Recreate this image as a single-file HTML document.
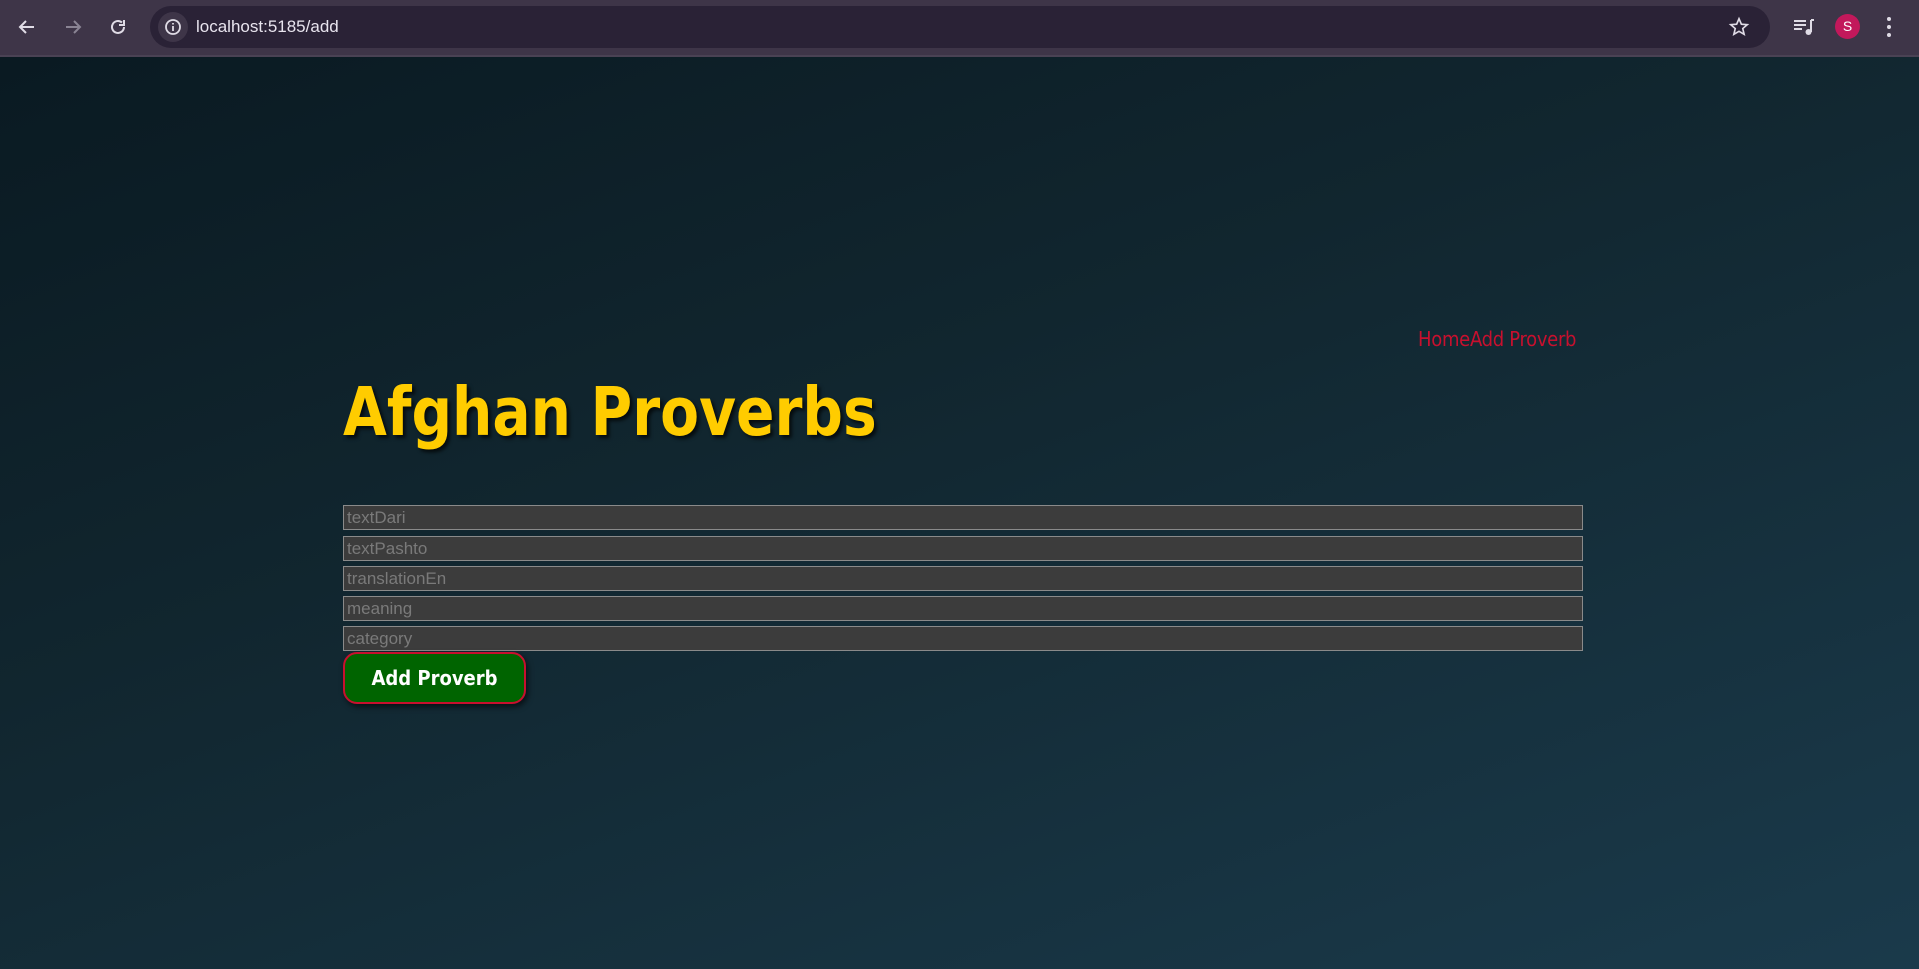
<!DOCTYPE html>
<html><head><meta charset="utf-8"><style>
html,body{margin:0;padding:0;width:1919px;height:969px;overflow:hidden;font-family:"Liberation Sans",sans-serif}
.bar{position:absolute;left:0;top:0;width:1919px;height:55px;background:#3e3548;border-bottom:2px solid #4a4254}
.omni{position:absolute;left:150px;top:6px;width:1620px;height:42px;border-radius:21px;background:#2a2236}
.url{position:absolute;left:196px;top:17px;color:#e8e4ee;font-size:17px}
.page{position:absolute;left:0;top:57px;width:1919px;height:912px;background:linear-gradient(160deg,#0a1a22 0%,#11262f 40%,#1a3a4b 100%)}
.nav{position:absolute;left:1418px;top:327px;color:#c8102e;font-size:20px;font-family:"DejaVu Sans Condensed","Liberation Sans",sans-serif;letter-spacing:-0.3px}
h1{position:absolute;left:343px;top:372px;margin:0;color:#ffcc00;font-size:67px;font-weight:bold;font-family:"DejaVu Sans Condensed","Liberation Sans",sans-serif;text-shadow:3px 3px 4px rgba(0,0,0,.7);transform:scaleX(0.94);transform-origin:left top;white-space:nowrap;line-height:80px}
.in{position:absolute;left:343px;width:1235px;height:23px;background:#3c3c3c;border:1px solid #8a8a8a;color:#7a7a7a;font-size:17px;line-height:23px;padding-left:3px;box-sizing:content-box}
.btn{position:absolute;left:343px;top:652px;width:179px;height:48px;background:#006400;border:2px solid #c8102e;border-radius:14px;color:#fff;font-weight:bold;font-size:20px;font-family:"DejaVu Sans Condensed","Liberation Sans",sans-serif;text-align:center;line-height:48px;box-shadow:2px 3px 6px rgba(0,0,0,.6)}
</style></head><body>
<div class="bar">
<svg style="position:absolute;left:16px;top:16px" width="22" height="22" viewBox="0 0 22 22"><path d="M18 11H4M10 5l-6 6 6 6" stroke="#e0dce6" stroke-width="2" fill="none"/></svg>
<svg style="position:absolute;left:62px;top:16px" width="22" height="22" viewBox="0 0 22 22"><path d="M4 11h14M12 5l6 6-6 6" stroke="#8a8494" stroke-width="2" fill="none"/></svg>
<svg style="position:absolute;left:107px;top:16px" width="22" height="22" viewBox="0 0 22 22"><path d="M17 11a6 6 0 1 1-2-4.5" stroke="#e0dce6" stroke-width="2" fill="none"/><path d="M17 4v5h-5" stroke="#e0dce6" stroke-width="2" fill="none"/></svg>
<div class="omni"></div>
<div style="position:absolute;left:158px;top:12px;width:30px;height:30px;border-radius:15px;background:#3e3548"></div>
<svg style="position:absolute;left:163px;top:17px" width="20" height="20" viewBox="0 0 20 20"><circle cx="10" cy="10" r="7" stroke="#e0dce6" stroke-width="1.8" fill="none"/><path d="M10 9v5M10 6v1.5" stroke="#e0dce6" stroke-width="1.8"/></svg>
<div class="url">localhost:5185/add</div>
<svg style="position:absolute;left:1728px;top:16px" width="22" height="22" viewBox="0 0 24 24"><path d="M12 3l2.6 6 6.4.5-4.9 4.2 1.5 6.3L12 16.7 6.4 20l1.5-6.3L3 9.5l6.4-.5z" stroke="#e0dce6" stroke-width="1.8" fill="none"/></svg>
<svg style="position:absolute;left:1792px;top:16px" width="24" height="22" viewBox="0 0 24 22"><path d="M2 5h12M2 9h12M2 13h8" stroke="#e0dce6" stroke-width="2"/><path d="M19 4v12" stroke="#e0dce6" stroke-width="2"/><path d="M19 4h3" stroke="#e0dce6" stroke-width="2"/><circle cx="16.5" cy="16" r="3" fill="#e0dce6"/></svg>
<div style="position:absolute;left:1835px;top:14px;width:25px;height:25px;border-radius:13px;background:#c2185b;color:#fff;font-size:14px;text-align:center;line-height:25px">S</div>
<svg style="position:absolute;left:1886px;top:16px" width="6" height="22" viewBox="0 0 6 22"><circle cx="3" cy="3" r="2" fill="#e0dce6"/><circle cx="3" cy="11" r="2" fill="#e0dce6"/><circle cx="3" cy="19" r="2" fill="#e0dce6"/></svg>
</div>
<div class="page"></div>
<div class="nav">HomeAdd Proverb</div>
<h1>Afghan Proverbs</h1>
<div class="in" style="top:505px">textDari</div>
<div class="in" style="top:536px">textPashto</div>
<div class="in" style="top:566px">translationEn</div>
<div class="in" style="top:596px">meaning</div>
<div class="in" style="top:626px">category</div>
<div class="btn">Add Proverb</div>
</body></html>
